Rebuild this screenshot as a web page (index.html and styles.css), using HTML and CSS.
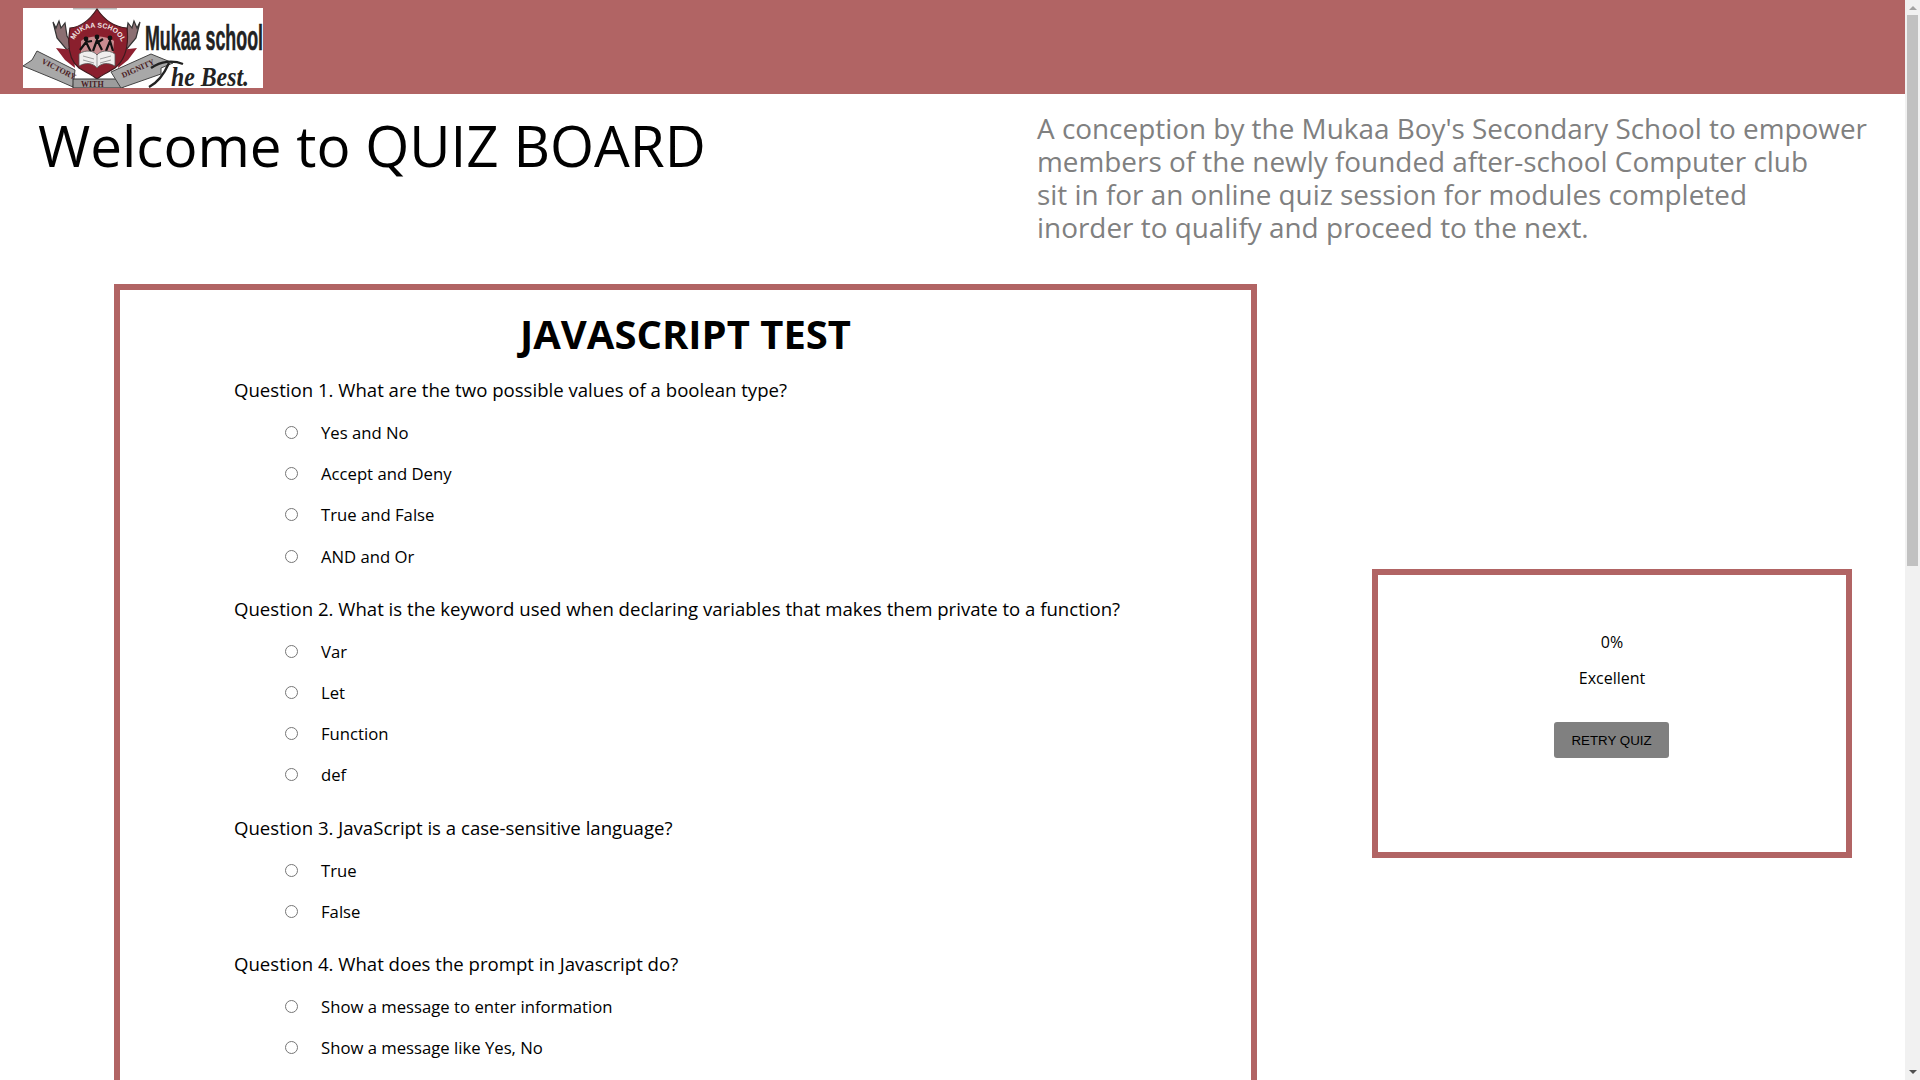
FILE: index.html
```html
<!DOCTYPE html>
<html lang="en">
  <head>
    <meta charset="UTF-8" />
    <title>Quiz Board</title>
    <link rel="stylesheet" href="styles.css">
  </head>
  <body>
    <header class="topbar">
      <svg class="logo" viewBox="0 0 240 80" role="img" aria-label="Mukaa school logo">
        <rect width="240" height="80" fill="#fff"/>
        <rect x="50" width="44" height="1.5" fill="#b9b9b9"/>
        <!-- side claws -->
        <path d="M30 14 L33 20 L36 13 L38 20 L42 15 L44 28 L50 38 L44 42 L34 30 Z" fill="#8b6f72" stroke="#333" stroke-width="1.2"/>
        <path d="M117 14 L114 20 L111 13 L109 20 L105 15 L103 28 L97 38 L103 42 L113 30 Z" fill="#8b6f72" stroke="#333" stroke-width="1.2"/>
        <path d="M33 40 L50 42 L52 60 L42 52 Z M114 40 L97 42 L95 60 L105 52 Z" fill="#8e2030"/>
        <!-- shield -->
        <path d="M47 20 C60 19 68 10 74 1 C80 10 90 19 104 20 C106 38 102 52 92 60 C86 64 80 66 74 71 C68 66 62 64 56 60 C46 52 44 38 47 20 Z" fill="#8a1f2d" stroke="#3f1a1e" stroke-width="1.2"/>
        <path id="crestArc" d="M50 36 C54 14 94 14 99 36" fill="none"/>
        <text class="logo-crest"><textPath href="#crestArc" startOffset="4">MUKAA SCHOOL</textPath></text>
        <path d="M58 33 C64 27 84 27 91 33 L90 46 L58 46 Z" fill="#c98c90"/>
        <circle cx="63" cy="31" r="2.4" fill="#111"/>
        <circle cx="74" cy="29" r="2.4" fill="#111"/>
        <circle cx="87" cy="30" r="2.4" fill="#111"/>
        <path d="M57 42 L63 34 L68 44 M63 34 L69 33 M70 43 L74 32 L79 42 M74 35 L80 31 M83 43 L87 33 L90 43" fill="none" stroke="#111" stroke-width="2.2"/>
        <path d="M56 46 C63 41 71 43 74 47 C77 43 85 41 92 46 L92 58 C85 54 78 55 74 60 C70 55 63 54 56 58 Z" fill="#f0eeee" stroke="#555" stroke-width=".8"/>
        <path d="M60 48 L71 51 M60 52 L71 55 M88 48 L77 51 M88 52 L77 55 M74 47 V60" stroke="#777" stroke-width=".7"/>
        <!-- banners -->
        <path d="M14 43 L52 62 L50 79 L34 72 L0 58 L9 52 Z" fill="#a8a8a8" stroke="#444" stroke-width="1"/>
        <path d="M50 71 H100 V80 H50 Z" fill="#9c9c9c" stroke="#333" stroke-width="1"/>
        <path d="M88 64 L128 46 L150 55 L138 60 L138 66 L98 80 Z" fill="#a8a8a8" stroke="#444" stroke-width="1"/>
        <text class="logo-banner" transform="translate(18 55) rotate(27)">VICTORY</text>
        <text class="logo-banner" x="58" y="79">WITH</text>
        <text class="logo-banner" transform="translate(100 70) rotate(-24)">DIGNITY</text>
        <text class="logo-name" x="122" y="42" textLength="118" lengthAdjust="spacingAndGlyphs">Mukaa school</text>
        <path d="M128 60 C138 53 150 52 160 56 M146 55 C142 64 136 74 126 79" fill="none" stroke="#222" stroke-width="2.4"/>
        <text class="logo-motto" x="148" y="78" textLength="78" lengthAdjust="spacingAndGlyphs">he Best.</text>
      </svg>
    </header>

    <section class="intro">
      <h1>Welcome to QUIZ BOARD</h1>
      <p>A conception by the Mukaa Boy's Secondary School to empower<br>
        members of the newly founded after-school Computer club<br>
        sit in for an online quiz session for modules completed<br>
        inorder to qualify and proceed to the next.</p>
    </section>

    <main class="content">
      <form class="quiz">
        <h2>JAVASCRIPT TEST</h2>

        <div class="question">
          <p>Question 1. What are the two possible values of a boolean type?</p>
          <label><input type="radio" name="q1">Yes and No</label>
          <label><input type="radio" name="q1">Accept and Deny</label>
          <label><input type="radio" name="q1">True and False</label>
          <label><input type="radio" name="q1">AND and Or</label>
        </div>

        <div class="question">
          <p>Question 2. What is the keyword used when declaring variables that makes them private to a function?</p>
          <label><input type="radio" name="q2">Var</label>
          <label><input type="radio" name="q2">Let</label>
          <label><input type="radio" name="q2">Function</label>
          <label><input type="radio" name="q2">def</label>
        </div>

        <div class="question">
          <p>Question 3. JavaScript is a case-sensitive language?</p>
          <label><input type="radio" name="q3">True</label>
          <label><input type="radio" name="q3">False</label>
        </div>

        <div class="question">
          <p>Question 4. What does the prompt in Javascript do?</p>
          <label><input type="radio" name="q4">Show a message to enter information</label>
          <label><input type="radio" name="q4">Show a message like Yes, No</label>
          <label><input type="radio" name="q4">Show a warning</label>
          <label><input type="radio" name="q4">Close the page</label>
        </div>

        <div class="question">
          <p>Question 5. Which symbol starts a single line comment?</p>
          <label><input type="radio" name="q5">//</label>
          <label><input type="radio" name="q5">##</label>
          <label><input type="radio" name="q5">**</label>
          <label><input type="radio" name="q5">--</label>
        </div>

        <div class="question">
          <p>Question 6. Which keyword declares a constant?</p>
          <label><input type="radio" name="q6">const</label>
          <label><input type="radio" name="q6">var</label>
          <label><input type="radio" name="q6">let</label>
          <label><input type="radio" name="q6">static</label>
        </div>

        <div class="question">
          <p>Question 7. Which method writes to the browser console?</p>
          <label><input type="radio" name="q7">console.log</label>
          <label><input type="radio" name="q7">alert</label>
          <label><input type="radio" name="q7">print</label>
          <label><input type="radio" name="q7">write</label>
        </div>

        <div class="question">
          <p>Question 8. Which operator compares both value and type?</p>
          <label><input type="radio" name="q8">===</label>
          <label><input type="radio" name="q8">==</label>
          <label><input type="radio" name="q8">=</label>
          <label><input type="radio" name="q8">!=</label>
        </div>
      </form>

      <aside class="result">
        <p>0%</p>
        <p>Excellent</p>
        <button type="button">RETRY QUIZ</button>
      </aside>
    </main>

    <div class="scrollbar" aria-hidden="true">
      <span class="arrow-up"></span>
      <span class="thumb"></span>
      <span class="arrow-down"></span>
    </div>
  </body>
</html>
```

FILE: styles.css
```css
body {
  font-family: "Open Sans", sans-serif;
  margin: 0;
  padding-right: 15px;
  background-color: #fff;
  color: #000;
}
.topbar {
  height: 94px;
  padding: 8px 23px 0;
  box-sizing: border-box;
  background-color: #b16464;
}
.logo {
  display: block;
  width: 240px;
  height: 80px;
}
.logo-name {
  font-family: "Liberation Sans", sans-serif;
  font-weight: bold;
  font-size: 35px;
  fill: #222;
  stroke: #222;
  stroke-width: 0.5px;
}
.logo-motto {
  font-family: "Liberation Serif", serif;
  font-style: italic;
  font-weight: bold;
  font-size: 28px;
  fill: #222;
}
.logo-crest {
  font-family: "Liberation Sans", sans-serif;
  font-weight: bold;
  font-size: 7px;
  fill: #f2e6e6;
}
.logo-banner {
  font-family: "Liberation Serif", serif;
  font-weight: bold;
  font-size: 8px;
  fill: #4a2024;
}
.intro {
  display: flex;
  height: 190px;
  padding-left: 38px;
}
.intro h1 {
  flex: 0 0 999px;
  margin: 17px 0 0;
  font-size: 56.6px;
  line-height: 70px;
  font-weight: 400;
}
.intro p {
  margin: 18px 0 0;
  font-size: 27.9px;
  line-height: 33px;
  color: #808080;
  white-space: nowrap;
}
.content {
  display: flex;
  align-items: flex-start;
  padding-left: 114px;
}
.quiz {
  width: 1143px;
  box-sizing: border-box;
  border: 6px solid #b16464;
  padding: 20px 0 0 114px;
}
.quiz h2 {
  margin: 0 0 17px;
  padding-right: 114px;
  font-size: 40px;
  line-height: 48px;
  text-align: center;
}
.question {
  margin-bottom: 17px;
}
.question p {
  margin: 0 0 7px;
  font-size: 18.6px;
  line-height: 30px;
}
.question label {
  display: flex;
  align-items: center;
  height: 41.2px;
  padding-left: 51px;
  font-size: 16.7px;
}
.question input {
  width: 13px;
  height: 13px;
  margin: 0 23px 0 0;
}
.result {
  width: 480px;
  height: 289px;
  box-sizing: border-box;
  margin: 285px 0 0 115px;
  border: 6px solid #b16464;
  padding-top: 57px;
  text-align: center;
  font-size: 16px;
}
.result p {
  margin: 0 0 16px;
  line-height: 20px;
}
.result button {
  display: block;
  width: 115px;
  height: 36px;
  margin: 34px 0 0 176px;
  border: none;
  border-radius: 3px;
  background-color: #808080;
  font-family: "Liberation Sans", sans-serif;
  font-size: 13.33px;
  color: #000;
}
.scrollbar {
  position: fixed;
  top: 0;
  right: 0;
  width: 15px;
  height: 100vh;
  display: flex;
  flex-direction: column;
  align-items: center;
  background-color: #f1f1f1;
}
.thumb {
  width: 11px;
  height: 551px;
  margin-top: 5px;
  background-color: #c1c1c1;
}
.arrow-up {
  margin-top: 6px;
  border: 4px solid transparent;
  border-top: none;
  border-bottom-color: #a3a3a3;
}
.arrow-down {
  margin-top: auto;
  margin-bottom: 6px;
  border: 4px solid transparent;
  border-bottom: none;
  border-top-color: #505050;
}
```
